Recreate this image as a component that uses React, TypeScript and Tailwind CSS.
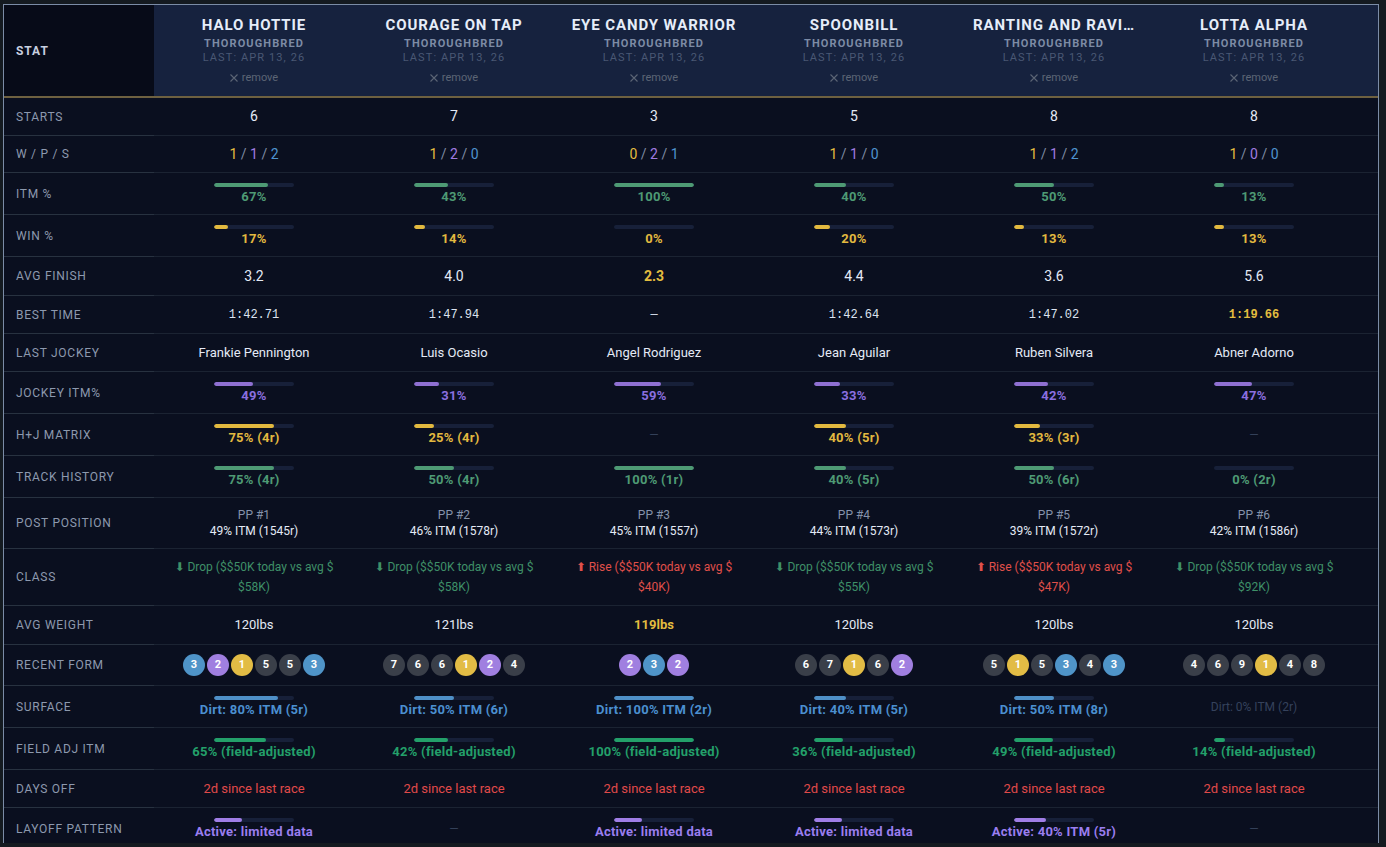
import React from "react";

type Horse = {
  name: string;
  starts: number;
  wps: [number, number, number];
  itm: number;
  win: number;
  avg: string;
  avgBest?: boolean;
  best: string;
  bestBold?: boolean;
  jockey: string;
  jitm: number;
  hj: null | { pct: number; text: string };
  track: { pct: number; text: string };
  pp: string;
  ppItm: string;
  classUp: boolean;
  classL1: string;
  classL2: string;
  weight: string;
  weightBold?: boolean;
  form: number[];
  surface: null | { pct: number; text: string };
  surfaceMuted?: string;
  field: number;
  layoff: null | { pct: number; text: string };
};

const horses: Horse[] = [
  {
    name: "HALO HOTTIE", starts: 6, wps: [1, 1, 2], itm: 67, win: 17, avg: "3.2", best: "1:42.71",
    jockey: "Frankie Pennington", jitm: 49, hj: { pct: 75, text: "75% (4r)" }, track: { pct: 75, text: "75% (4r)" },
    pp: "PP #1", ppItm: "49% ITM (1545r)", classUp: false, classL1: "⬇ Drop ($$50K today vs avg $", classL2: "$58K)",
    weight: "120lbs", form: [3, 2, 1, 5, 5, 3], surface: { pct: 80, text: "Dirt: 80% ITM (5r)" }, field: 65,
    layoff: { pct: 35, text: "Active: limited data" },
  },
  {
    name: "COURAGE ON TAP", starts: 7, wps: [1, 2, 0], itm: 43, win: 14, avg: "4.0", best: "1:47.94",
    jockey: "Luis Ocasio", jitm: 31, hj: { pct: 25, text: "25% (4r)" }, track: { pct: 50, text: "50% (4r)" },
    pp: "PP #2", ppItm: "46% ITM (1578r)", classUp: false, classL1: "⬇ Drop ($$50K today vs avg $", classL2: "$58K)",
    weight: "121lbs", form: [7, 6, 6, 1, 2, 4], surface: { pct: 50, text: "Dirt: 50% ITM (6r)" }, field: 42,
    layoff: null,
  },
  {
    name: "EYE CANDY WARRIOR", starts: 3, wps: [0, 2, 1], itm: 100, win: 0, avg: "2.3", avgBest: true, best: "—",
    jockey: "Angel Rodriguez", jitm: 59, hj: null, track: { pct: 100, text: "100% (1r)" },
    pp: "PP #3", ppItm: "45% ITM (1557r)", classUp: true, classL1: "⬆ Rise ($$50K today vs avg $", classL2: "$40K)",
    weight: "119lbs", weightBold: true, form: [2, 3, 2], surface: { pct: 100, text: "Dirt: 100% ITM (2r)" }, field: 100,
    layoff: { pct: 35, text: "Active: limited data" },
  },
  {
    name: "SPOONBILL", starts: 5, wps: [1, 1, 0], itm: 40, win: 20, avg: "4.4", best: "1:42.64",
    jockey: "Jean Aguilar", jitm: 33, hj: { pct: 40, text: "40% (5r)" }, track: { pct: 40, text: "40% (5r)" },
    pp: "PP #4", ppItm: "44% ITM (1573r)", classUp: false, classL1: "⬇ Drop ($$50K today vs avg $", classL2: "$55K)",
    weight: "120lbs", form: [6, 7, 1, 6, 2], surface: { pct: 40, text: "Dirt: 40% ITM (5r)" }, field: 36,
    layoff: { pct: 35, text: "Active: limited data" },
  },
  {
    name: "RANTING AND RAVI…", starts: 8, wps: [1, 1, 2], itm: 50, win: 13, avg: "3.6", best: "1:47.02",
    jockey: "Ruben Silvera", jitm: 42, hj: { pct: 33, text: "33% (3r)" }, track: { pct: 50, text: "50% (6r)" },
    pp: "PP #5", ppItm: "39% ITM (1572r)", classUp: true, classL1: "⬆ Rise ($$50K today vs avg $", classL2: "$47K)",
    weight: "120lbs", form: [5, 1, 5, 3, 4, 3], surface: { pct: 50, text: "Dirt: 50% ITM (8r)" }, field: 49,
    layoff: { pct: 40, text: "Active: 40% ITM (5r)" },
  },
  {
    name: "LOTTA ALPHA", starts: 8, wps: [1, 0, 0], itm: 13, win: 13, avg: "5.6", best: "1:19.66", bestBold: true,
    jockey: "Abner Adorno", jitm: 47, hj: null, track: { pct: 0, text: "0% (2r)" },
    pp: "PP #6", ppItm: "42% ITM (1586r)", classUp: false, classL1: "⬇ Drop ($$50K today vs avg $", classL2: "$92K)",
    weight: "120lbs", form: [4, 6, 9, 1, 4, 8], surface: null, surfaceMuted: "Dirt: 0% ITM (2r)", field: 14,
    layoff: null,
  },
];

function Bar({ pct, fill, text, textCls }: { pct: number; fill: string; text: string; textCls: string }) {
  return (
    <div className="flex flex-col items-center gap-[2px]">
      <div className="w-20 h-1 rounded-full bg-[#172039] overflow-hidden">
        <div className={`h-full rounded-full ${fill}`} style={{ width: `${pct}%` }} />
      </div>
      <div className={`text-[13px] font-bold leading-4 tracking-[0.02em] ${textCls}`}>{text}</div>
    </div>
  );
}

function Dash() {
  return <div className="text-[12px] text-[#334058]">—</div>;
}

function formColor(n: number) {
  if (n === 1) return "bg-[#e2bc45]";
  if (n === 2) return "bg-[#a07fe0]";
  if (n === 3) return "bg-[#4f94c8]";
  return "bg-[#3a3f49]";
}

type RowDef = { label: string; h: string; render: (h: Horse) => React.ReactNode };

const rows: RowDef[] = [
  { label: "STARTS", h: "h-[38px]", render: (h) => <div className="text-[14px] text-[#e4eaf6]">{h.starts}</div> },
  {
    label: "W / P / S", h: "h-[37px]",
    render: (h) => (
      <div className="text-[14px] text-[#7f8ba2]">
        <span className="text-[#e3bd3f]">{h.wps[0]}</span> / <span className="text-[#a07be0]">{h.wps[1]}</span> /{" "}
        <span className="text-[#4f93cf]">{h.wps[2]}</span>
      </div>
    ),
  },
  { label: "ITM %", h: "h-[42px]", render: (h) => <Bar pct={h.itm} fill="bg-[#4e9a74]" textCls="text-[#4e9a74]" text={`${h.itm}%`} /> },
  { label: "WIN %", h: "h-[42px]", render: (h) => <Bar pct={h.win} fill="bg-[#e2b93f]" textCls="text-[#e2b93f]" text={`${h.win}%`} /> },
  {
    label: "AVG FINISH", h: "h-[39px]",
    render: (h) =>
      h.avgBest ? (
        <div className="text-[14px] font-bold text-[#e3bd3f]">{h.avg}</div>
      ) : (
        <div className="text-[14px] text-[#e4eaf6]">{h.avg}</div>
      ),
  },
  {
    label: "BEST TIME", h: "h-[38px]",
    render: (h) => (
      <div className={`text-[12px] [font-family:'Liberation_Mono',monospace] ${h.bestBold ? "font-bold text-[#e3bd3f]" : "text-[#dce3f0]"}`}>
        {h.best}
      </div>
    ),
  },
  { label: "LAST JOCKEY", h: "h-[38px]", render: (h) => <div className="text-[13px] text-[#e4eaf6]">{h.jockey}</div> },
  { label: "JOCKEY ITM%", h: "h-[42px]", render: (h) => <Bar pct={h.jitm} fill="bg-[#8f70d2]" textCls="text-[#8a6fe0]" text={`${h.jitm}%`} /> },
  {
    label: "H+J MATRIX", h: "h-[42px]",
    render: (h) => (h.hj ? <Bar pct={h.hj.pct} fill="bg-[#e2b93f]" textCls="text-[#e2b93f]" text={h.hj.text} /> : <Dash />),
  },
  { label: "TRACK HISTORY", h: "h-[42px]", render: (h) => <Bar pct={h.track.pct} fill="bg-[#4e9a74]" textCls="text-[#4e9a74]" text={h.track.text} /> },
  {
    label: "POST POSITION", h: "h-[51px]",
    render: (h) => (
      <div className="flex flex-col items-center text-[12px] leading-4">
        <div className="text-[#8592aa]">{h.pp}</div>
        <div className="text-[#e4eaf6]">{h.ppItm}</div>
      </div>
    ),
  },
  {
    label: "CLASS", h: "h-[57px]",
    render: (h) => (
      <div className={`text-center text-[12px] leading-5 ${h.classUp ? "text-[#e0504a]" : "text-[#3f9068]"}`}>
        {h.classL1}
        <br />
        {h.classL2}
      </div>
    ),
  },
  {
    label: "AVG WEIGHT", h: "h-[39px]",
    render: (h) => (
      <div className={`text-[13px] ${h.weightBold ? "font-bold text-[#e3bd3f]" : "text-[#e4eaf6]"}`}>{h.weight}</div>
    ),
  },
  {
    label: "RECENT FORM", h: "h-[41px]",
    render: (h) => (
      <div className="flex gap-[2px]">
        {h.form.map((n, i) => (
          <div key={i} className={`w-[22px] h-[22px] rounded-full flex items-center justify-center text-[11px] font-bold text-white ${formColor(n)}`}>
            {n}
          </div>
        ))}
      </div>
    ),
  },
  {
    label: "SURFACE", h: "h-[42px]",
    render: (h) =>
      h.surface ? (
        <Bar pct={h.surface.pct} fill="bg-[#4f90c8]" textCls="text-[#4b8fd0]" text={h.surface.text} />
      ) : (
        <div className="text-[12px] text-[#35425c]">{h.surfaceMuted}</div>
      ),
  },
  { label: "FIELD ADJ ITM", h: "h-[42px]", render: (h) => <Bar pct={h.field} fill="bg-[#23a06a]" textCls="text-[#23a06a]" text={`${h.field}% (field-adjusted)`} /> },
  { label: "DAYS OFF", h: "h-[38px]", render: () => <div className="text-[13px] text-[#e04a4a]">2d since last race</div> },
  {
    label: "LAYOFF PATTERN", h: "h-[42px]",
    render: (h) => (h.layoff ? <Bar pct={h.layoff.pct} fill="bg-[#a07ee6]" textCls="text-[#9a7ef0]" text={h.layoff.text} /> : <Dash />),
  },
];

export default function App() {
  return (
    <div className="w-[1386px] h-[847px] overflow-hidden bg-[#141a20] pt-1 pl-[3px] [font-family:Roboto,'DejaVu_Sans',sans-serif]">
      <div className="w-[1376px] h-[839px] overflow-hidden border-l border-t border-r border-[#7b8ca6] bg-[#0a0f1f]">
        <div className="flex h-[93px] border-b-2 border-[#6e6140]">
          <div className="w-[150px] shrink-0 flex items-center pl-3 bg-[#070b18] text-[12px] font-bold tracking-[0.08em] text-[#c8d0e0]">
            STAT
          </div>
          {horses.map((h, i) => (
            <div key={i} className="w-[200px] shrink-0 flex flex-col items-center pt-[10px] bg-[#16223e]">
              <div className="text-[15px] leading-5 font-bold tracking-[0.06em] text-[#e6edf9] whitespace-nowrap">{h.name}</div>
              <div className="mt-[2px] text-[11px] leading-[14px] font-bold tracking-[0.1em] text-[#7d8ba5]">THOROUGHBRED</div>
              <div className="text-[11px] leading-[14px] tracking-[0.1em] text-[#4a5874]">LAST: APR 13, 26</div>
              <div className="mt-[6px] flex items-center gap-[4px] text-[11px] leading-[14px] text-[#5c6575]">
                <svg width="8" height="8" viewBox="0 0 8 8" className="shrink-0">
                  <path d="M0.5 0.5 L7.5 7.5 M7.5 0.5 L0.5 7.5" stroke="#5c6575" strokeWidth="1.1" />
                </svg>
                remove
              </div>
            </div>
          ))}
          <div className="flex-1 bg-[#16223e]" />
        </div>
        {rows.map((r, ri) => (
          <div key={ri} className={`flex ${r.h}`}>
            <div className="w-[150px] shrink-0 flex items-center pl-3 border-b border-[#283240] text-[12px] tracking-[0.06em] text-[#8d99ae]">
              {r.label}
            </div>
            {horses.map((h, hi) => (
              <div key={hi} className="w-[200px] shrink-0 flex flex-col items-center justify-center border-b border-[#1b2332] whitespace-nowrap">
                {r.render(h)}
              </div>
            ))}
            <div className="flex-1 border-b border-[#1b2332]" />
          </div>
        ))}
      </div>
    </div>
  );
}
